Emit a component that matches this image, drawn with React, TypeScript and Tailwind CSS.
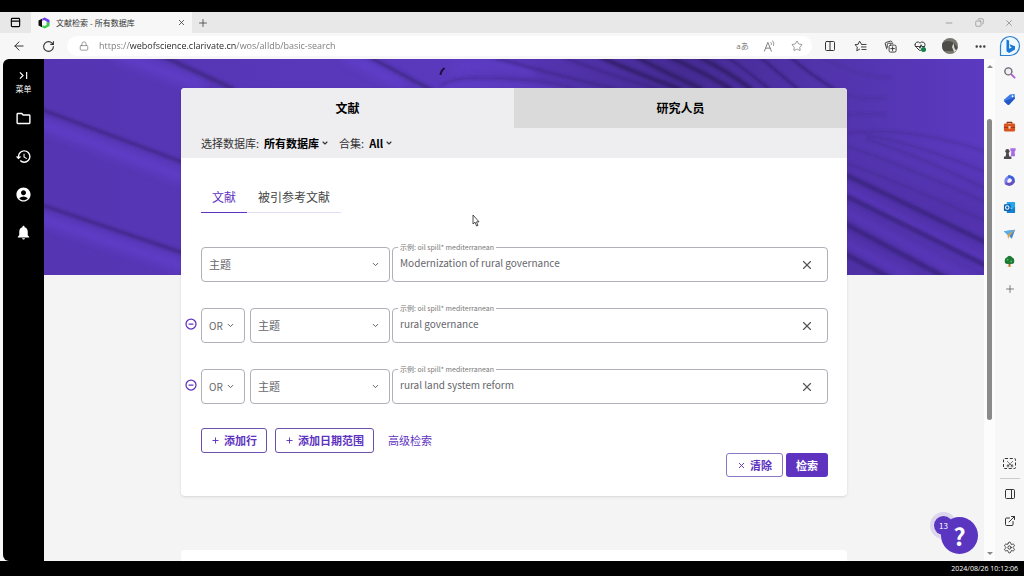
import React, { useState } from 'react';
import {
  ArrowLeft,
  ChevronDown,
  CircleMinus,
  Columns2,
  Copy,
  Ellipsis,
  ExternalLink,
  HeartPulse,
  Lock,
  Minus,
  PanelRight,
  PanelTop,
  Plus,
  RotateCw,
  Scissors,
  Settings,
  Star,
  X,
} from 'lucide-react';
import { MdAccountCircle, MdHistory, MdNotifications, MdOutlineFolder } from 'react-icons/md';

interface SearchRow {
  id: number;
  operator?: string;
  value: string;
}

const initialRows: SearchRow[] = [
  { id: 1, value: 'Modernization of rural governance' },
  { id: 2, operator: 'OR', value: 'rural governance' },
  { id: 3, operator: 'OR', value: 'rural land system reform' },
];

const Logo = () => (
  <svg viewBox="0 0 12 12" className="size-3 shrink-0" aria-hidden="true">
    <path d="M.5 3.500 4 1.800v8.400L.5 8.500z" fill="#111" />
    <path d="M4.300 1.500 6.800.4 11.500 3v3.200L8.600 5V4.200L6 3 4.300 4z" fill="#6a3df0" />
    <path d="M11.500 6V9l-4.700 2.600-2.500-1.200V8.300l2 .7L8.600 8V5z" fill="#3ccb4a" />
  </svg>
);

const TranslateIcon = () => (
  <span className="text-[8px] leading-none" aria-hidden="true">aあ</span>
);

const ReadAloudIcon = () => (
  <svg viewBox="0 0 14 14" className="size-[13px]" fill="none" stroke="currentColor" strokeLinecap="round">
    <path d="m1.500 12 3.700-9.500L9 12M2.800 8.800h4.900" />
    <path d="M8.500 2.500q1 1 .6 2.500M10.500 1q1.800 2.200 1 5" strokeWidth=".8" />
  </svg>
);

const FavoritesIcon = () => (
  <svg viewBox="0 0 14 14" className="size-[13px]" fill="none" stroke="currentColor" strokeLinecap="round" strokeLinejoin="round">
    <path d="M8.200 4.800 6 1.200 4.500 4.600 1 5l2.600 2.500L3 11.600l3-1.700" />
    <path d="M8.500 4.800h4.500M8 7.500h5M8.500 10.200H13" />
  </svg>
);

const CollectionsIcon = () => (
  <svg viewBox="0 0 14 14" className="size-[13px]" fill="none" stroke="currentColor" strokeLinecap="round">
    <path d="M3 9.500 1.300 4.200Q1 3 2.200 2.600L7 1.200q1.200-.3 1.600.8" />
    <path d="M3.500 8V5q0-1.500 1.500-1.500h4.500" />
    <rect x="5.500" y="5.500" width="7.500" height="7.500" rx="1.500" />
    <path d="M9.250 7.300v4M7.250 9.250h4" />
  </svg>
);

const BingIcon = () => (
  <svg viewBox="0 0 22 22" className="size-[22px]">
    <path d="M1.500 20.500V11a9.500 9.500 0 1 1 9.500 9.500z" fill="#eef8ff" stroke="#2b7fd0" strokeWidth="1.200" />
    <path d="m7.500 4.500 2.600 1v8.300l2.700-1.200-1.300-.8-1-2.500 5.500 2v3.200l-5.900 3.400-2.600-1.600z" fill="#1a78d6" />
  </svg>
);

const MagnifierIcon = () => (
  <svg viewBox="0 0 14 14" className="size-[13px]" fill="none" strokeLinecap="round">
    <circle cx="5.800" cy="5.800" r="3.800" fill="#eef0f4" stroke="#6b6670" strokeWidth="1.500" />
    <path d="m9 9 3.500 3.500" stroke="#b05fd6" strokeWidth="2" />
  </svg>
);

const TagIcon = () => (
  <svg viewBox="0 0 14 14" className="size-[13px]">
    <path d="M7.500 1.500 12.500 1l.3 5-6 6.500q-1 .8-2 0L1.300 9q-.8-1 0-2z" fill="#3f7be8" />
    <path d="m1.300 9 3.500 3.500q1 .8 2 0l6-6.500-.1-1.500z" fill="#2456c4" />
    <circle cx="10.300" cy="3.500" r="1" fill="#fff" />
  </svg>
);

const ToolboxIcon = () => (
  <svg viewBox="0 0 14 14" className="size-[13px]">
    <path d="M4.500 4V2.500h5V4" fill="none" stroke="#8a3512" strokeWidth="1.200" />
    <rect x="1" y="3.800" width="12" height="8.500" rx="1.200" fill="#d9531e" />
    <path d="M1 7.500h12v1H1z" fill="#9c3410" />
    <rect x="5.800" y="6.500" width="2.400" height="2.800" rx=".5" fill="#f4d2b8" />
  </svg>
);

const GamesIcon = () => (
  <svg viewBox="0 0 14 14" className="size-[13px]">
    <path d="M8 1h1.200v1H10V1h1.500v1h.7V1h1.300v3l-1 .8.5 5.200H8.500L9 4.800 8 4z" fill="#a86be6" />
    <circle cx="4.800" cy="4.500" r="2.300" fill="#4a4a4e" />
    <path d="M3.600 6.300h2.400l.8 4H9V13H1v-2.700h1.800z" fill="#4a4a4e" />
  </svg>
);

const OfficeIcon = () => (
  <svg viewBox="0 0 14 14" className="size-[13px]" fill="none" strokeWidth="3.200" strokeLinecap="round">
    <path d="M3.200 9.500Q2.200 5.500 6.500 3" stroke="#7a86f2" />
    <path d="M7 2.800q4.500.8 4.200 5" stroke="#3f5fd8" />
    <path d="M11 8.500Q8.500 12.500 4 10.500" stroke="#6a4fc4" />
  </svg>
);

const OutlookIcon = () => (
  <svg viewBox="0 0 14 14" className="size-[13px]">
    <rect x="4" y="1" width="9" height="7" rx=".8" fill="#2aa5ea" />
    <path d="M4 6.500 8.500 9 13 6.500V12q0 1-1 1H5q-1 0-1-1z" fill="#1580cf" />
    <rect x="1" y="3.500" width="7.200" height="7.200" rx=".8" fill="#0b62ad" />
    <circle cx="4.600" cy="7.100" r="1.900" fill="none" stroke="#fff" strokeWidth="1.100" />
  </svg>
);

const DropIcon = () => (
  <svg viewBox="0 0 14 14" className="size-[13px]">
    <path d="M1 3.500 13 2 9.500 11.500 6.800 9z" fill="#3b8bd6" />
    <path d="M1 3.500 13 2 4.800 7.500z" fill="#5aaeea" />
    <path d="M4.800 7.500 13 2 6.800 9l-1.300 3z" fill="#e6a33c" />
  </svg>
);

const TreeIcon = () => (
  <svg viewBox="0 0 14 14" className="size-[13px]">
    <path d="M6 9h2v3.500H6z" fill="#a8642a" />
    <path d="M4 13q3-2 6 0z" fill="#e2a53a" />
    <path d="M7 .8q2 0 2.600 1.700Q12 3.200 12 5.500 13 10 8.500 9.700h-3Q1 10 2 5.500 2 3.200 4.400 2.500 5 .8 7 .8z" fill="#1c7a35" />
    <circle cx="5" cy="5" r="1" fill="#4dbb55" />
    <circle cx="8.800" cy="7" r="1" fill="#4dbb55" />
  </svg>
);

const ScreenshotIcon = () => (
  <span className="grid h-[11px] w-[13px] place-items-center rounded-[2px] border border-dashed border-[#333]">
    <Scissors size={8} className="-rotate-90" />
  </span>
);

const Cursor = () => (
  <svg viewBox="0 0 8 13" className="absolute left-[428px] top-[155px] h-[13px] w-2" aria-hidden="true">
    <path d="M1 1v9l2-1.800L4.600 12l1.400-.6-1.500-3.600H7z" fill="#fff" stroke="#222" strokeWidth=".8" />
  </svg>
);

const Banner = () => (
  <svg
    viewBox="0 0 941 216"
    preserveAspectRatio="none"
    className="col-start-1 row-start-1 h-[216px] w-full"
    aria-hidden="true"
  >
    <defs>
      <linearGradient id="base" x1="0" x2="1">
        <stop offset="0" stopColor="#5635b2" />
        <stop offset=".45" stopColor="#5a39bd" />
        <stop offset=".58" stopColor="#4f31a6" />
        <stop offset=".68" stopColor="#452a92" />
        <stop offset=".82" stopColor="#5133aa" />
        <stop offset="1" stopColor="#5b3ac0" />
      </linearGradient>
      <linearGradient id="shade" x1="0" y1="0" x2="0" y2="1">
        <stop offset=".4" stopColor="#4a2c9c" stopOpacity="0" />
        <stop offset=".7" stopColor="#4a2c9c" stopOpacity=".5" />
      </linearGradient>
      <filter id="soft" x="-5%" y="-20%" width="110%" height="140%">
        <feGaussianBlur stdDeviation="1.800" />
      </filter>
      <filter id="softer" x="-5%" y="-20%" width="110%" height="140%">
        <feGaussianBlur stdDeviation="4" />
      </filter>
    </defs>
    <rect width="941" height="216" fill="url(#base)" />
    <rect x="800" width="141" height="216" fill="url(#shade)" />
    {/* lit side of each fold */}
    <g filter="url(#softer)" fill="none" stroke="#5f3dc8">
      <path d="M-20 58 160 126M-20 154 160 214M70-6 160 28M300-4 360 26" strokeWidth="11" />
      <path d="M396 32q40-12 130 4M410 10q40-10 80 4" strokeWidth="7" />
      <path d="M795 128 960 212M795 148 930 222M790 176l80 44" strokeWidth="7" strokeOpacity=".7" />
    </g>
    {/* shadow side */}
    <g filter="url(#soft)" fill="none" stroke="#3d2585">
      <path d="M-20 44 160 111M-20 140 160 201" strokeWidth="4" strokeOpacity=".8" />
      <path d="M112-6 190 30" strokeWidth="5" strokeOpacity=".8" />
      <path d="M320-5 390 32" strokeWidth="4" strokeOpacity=".8" />
      <path d="M396 27q14-9 40-8 60 0 94 10" strokeWidth="2" strokeOpacity=".6" />
      <path d="M450-2q60 18 123 32M520-2q45 18 95 32" strokeWidth="3" strokeOpacity=".7" />
      <path d="M557-2q40 18 80 32M593-2q34 18 66 32M626-2q32 14 62 32M656-2q28 14 52 32" stroke="#2e1a66" strokeWidth="5" strokeOpacity=".8" />
      <path d="M684-2q20 14 42 32M717-2q16 14 38 32M747-2q18 16 44 32" stroke="#331e70" strokeWidth="2" />
      <path d="M780-2q38 22 68 20M803 36q20 6 40 2M803 56q30-2 40 0" strokeWidth="2" strokeOpacity=".4" />
      <path d="M803 74q64-8 150 22M822 76q50 8 131 41M822 80q50 14 131 55M803 87q60 20 150 61M803 104q60 22 150 63" strokeWidth="3" strokeOpacity=".35" />
      <path d="M803 116 950 187M803 137 950 210M795 161 905 220M795 191l54 29" stroke="#371f78" strokeWidth="5" strokeOpacity=".75" />
    </g>
    <path d="M397 16q0-4 4-7" fill="none" stroke="#1c103f" strokeWidth="2" />
  </svg>
);

const BrowserChrome = () => (
  <header className="font-['Open_Sans','Noto_Sans_CJK_SC',sans-serif] text-[#333]">
    <div className="flex h-[21px] items-stretch bg-[#e8e8e8]">
      <button className="grid w-[31px] place-items-center text-black" aria-label="Tab actions">
        <PanelTop size={11} strokeWidth={2.5} />
      </button>
      <div className="flex w-[161px] items-center gap-1.5 bg-[#f7f7f7] pl-[7px] pr-1.5">
        <Logo />
        <span className="flex-1 truncate text-[8px]">文献检索 - 所有数据库</span>
        <button aria-label="Close tab"><X size={9} /></button>
      </div>
      <button className="ml-px grid w-5 place-items-center" aria-label="New tab"><Plus size={12} strokeWidth={1.5} /></button>
      <div className="ml-auto flex text-[#777]">
        <button className="grid w-[30px] place-items-center" aria-label="Minimize"><Minus size={10} strokeWidth={1.5} /></button>
        <button className="grid w-[30px] place-items-center" aria-label="Restore"><Copy size={9} strokeWidth={1.5} className="-scale-x-100" /></button>
        <button className="grid w-[30px] place-items-center" aria-label="Close window"><X size={10} strokeWidth={1.5} /></button>
      </div>
    </div>
    <div className="flex h-[26px] items-center bg-[#f7f7f7]">
      <button className="grid w-[37px] place-items-center" aria-label="Back"><ArrowLeft size={14} strokeWidth={1.7} /></button>
      <button className="grid w-[22px] place-items-center" aria-label="Refresh"><RotateCw size={13} strokeWidth={2} /></button>
      <div className="ml-2 mr-[3px] flex h-[20px] flex-1 items-center rounded-full bg-white pl-3 pr-0.5 text-[#777]">
        <Lock size={10} strokeWidth={1.7} />
        <input
          aria-label="Address"
          defaultValue="https://webofscience.clarivate.cn/wos/alldb/basic-search"
          className="ml-[10px] min-w-0 flex-1 bg-[linear-gradient(90deg,#777_30px,#222_30px,#222_137px,#777_137px)] bg-clip-text text-[9px] text-transparent outline-none"
        />
        <button className="grid w-[27px] place-items-center" aria-label="Translate"><TranslateIcon /></button>
        <button className="grid w-[27px] place-items-center" aria-label="Read aloud"><ReadAloudIcon /></button>
        <button className="grid w-[27px] place-items-center" aria-label="Add to favorites"><Star size={12} strokeWidth={1.5} /></button>
      </div>
      <button className="grid w-[30px] place-items-center" aria-label="Split screen"><Columns2 size={12} /></button>
      <button className="grid w-[30px] place-items-center" aria-label="Favorites"><FavoritesIcon /></button>
      <button className="grid w-[30px] place-items-center" aria-label="Collections"><CollectionsIcon /></button>
      <button className="relative grid w-[30px] place-items-center" aria-label="Browser essentials">
        <HeartPulse size={12} />
        <span className="absolute bottom-0 right-[9px] size-[5px] rounded-full bg-[#14804a]" />
      </button>
      <button className="grid w-[30px] place-items-center" aria-label="Profile">
        <svg viewBox="0 0 16 16" className="size-4 rounded-full">
          <rect width="16" height="16" fill="#77766f" />
          <path d="M0 5q6-4 12 0l4 5-4 3H0z" fill="#4c4c48" />
          <path d="m10 9 1.500-4 1 5 2 3-2.500 1z" fill="#d8d6cc" />
        </svg>
      </button>
      <button className="grid w-[30px] place-items-center" aria-label="More"><Ellipsis size={13} strokeWidth={2.5} /></button>
      <button className="grid w-[29px] place-items-center" aria-label="Bing"><BingIcon /></button>
    </div>
  </header>
);

const SideNav = () => (
  <nav className="flex w-[41px] shrink-0 flex-col items-center rounded-l-md bg-black pt-[11px] text-white">
    <button className="flex flex-col items-center gap-0.5 text-[8px] leading-3">
      <svg viewBox="0 0 10 10" className="my-px size-[9px]" fill="none" stroke="currentColor" strokeWidth="1.300">
        <path d="m1 1.500 3.500 3.500L1 8.500M8.500 1v8" />
      </svg>
      菜单
    </button>
    <div className="mt-[15px] flex flex-col gap-[21px]">
      <button aria-label="文件夹"><MdOutlineFolder size={17} /></button>
      <button aria-label="历史"><MdHistory size={17} /></button>
      <button aria-label="账户"><MdAccountCircle size={17} /></button>
      <button aria-label="通知"><MdNotifications size={17} /></button>
    </div>
  </nav>
);

const edgeApps = [
  { name: 'Search', icon: <MagnifierIcon /> },
  { name: 'Shopping', icon: <TagIcon /> },
  { name: 'Tools', icon: <ToolboxIcon /> },
  { name: 'Games', icon: <GamesIcon /> },
  { name: 'Microsoft 365', icon: <OfficeIcon /> },
  { name: 'Outlook', icon: <OutlookIcon /> },
  { name: 'Drop', icon: <DropIcon /> },
  { name: 'Tree', icon: <TreeIcon /> },
  { name: 'Customize', icon: <Plus size={12} strokeWidth={1.5} className="text-[#555]" /> },
];

const EdgeBar = () => (
  <aside className="flex w-[29px] shrink-0 flex-col items-center bg-[#f7f7f7] text-[#333]">
    {edgeApps.map((app) => (
      <button key={app.name} aria-label={app.name} className="grid h-[27px] w-full place-items-center">
        {app.icon}
      </button>
    ))}
    <button className="mt-auto grid h-[27px] place-items-center" aria-label="Screenshot"><ScreenshotIcon /></button>
    <hr className="my-px w-5 border-[#ccc]" />
    <button className="grid h-[27px] place-items-center" aria-label="Hide sidebar"><PanelRight size={12} /></button>
    <button className="grid h-[27px] place-items-center" aria-label="Open in new window"><ExternalLink size={12} /></button>
    <button className="grid h-[27px] place-items-center" aria-label="Settings"><Settings size={13} strokeWidth={1.7} /></button>
  </aside>
);

const ScrollBar = () => (
  <div className="flex w-[11px] shrink-0 flex-col items-center bg-[#fcfcfc] py-1.5" aria-hidden="true">
    <span className="border-x-[3px] border-b-[3px] border-x-transparent border-b-[#888]" />
    <span className="mt-[51px] h-[301px] w-[5px] rounded-full bg-[#8a8a8a]" />
    <span className="mt-auto border-x-[3px] border-t-[3px] border-x-transparent border-t-[#888]" />
  </div>
);

interface PickerProps {
  label: string;
  options: string[];
  className: string;
}

const Picker: React.FC<PickerProps> = ({ label, options, className }) => (
  <div className={`relative h-[35px] shrink-0 ${className}`}>
    <select
      aria-label={label}
      className="size-full appearance-none rounded border border-[#b0b0b8] bg-white px-[7px] text-[#66666c]"
    >
      {options.map((o) => (
        <option key={o}>{o}</option>
      ))}
    </select>
    <ChevronDown size={9} strokeWidth={2.5} className="pointer-events-none absolute right-[10px] top-[13px] text-[#555]" />
  </div>
);

interface InlineSelectProps {
  label: string;
  value: string;
}

const InlineSelect: React.FC<InlineSelectProps> = ({ label, value }) => (
  <label className="flex items-center">
    <span className="mr-[5px]">{label}:</span>
    <select className="appearance-none font-bold text-black [field-sizing:content]">
      <option>{value}</option>
    </select>
    <ChevronDown size={8} strokeWidth={3.5} className="ml-0.5" />
  </label>
);

interface RowProps {
  row: SearchRow;
  onChange: (id: number, value: string) => void;
  onRemove: (id: number) => void;
}

const QueryRow: React.FC<RowProps> = ({ row, onChange, onRemove }) => (
  <div className="flex items-center">
    {row.operator && (
      <>
        <button
          onClick={() => onRemove(row.id)}
          aria-label="删除行"
          className="-ml-4 mr-1 pb-1 text-[#5e33bf]"
        >
          <CircleMinus size={12} strokeWidth={2.5} />
        </button>
        <Picker label="运算符" options={[row.operator, 'AND', 'NOT']} className="mr-[5px] w-[44px] text-[10px]" />
      </>
    )}
    <Picker
      label="字段"
      options={['主题', '标题', '作者']}
      className={row.operator ? 'w-[140px] text-[11px]' : 'w-[189px] text-[11px]'}
    />
    <div className="relative ml-0.5 flex h-[35px] min-w-0 flex-1 items-center rounded border border-[#b0b0b8] bg-white pl-[7px] pr-[13px]">
      <label
        htmlFor={`query-${row.id}`}
        className="absolute -top-[6px] left-[5px] bg-white px-0.5 text-[7px] leading-[10px] text-[#777]"
      >
        示例: oil spill* mediterranean
      </label>
      <input
        id={`query-${row.id}`}
        value={row.value}
        onChange={(e) => onChange(row.id, e.target.value)}
        className="min-w-0 flex-1 pb-1 text-[10px] text-[#66666c] outline-none"
      />
      <button onClick={() => onChange(row.id, '')} aria-label="清除输入" className="text-[#555]">
        <X size={14} />
      </button>
    </div>
  </div>
);

const SearchCard = () => {
  const [rows, setRows] = useState(initialRows);

  const changeRow = (id: number, value: string) =>
    setRows(rows.map((r) => (r.id === id ? { ...r, value } : r)));
  const removeRow = (id: number) => setRows(rows.filter((r) => r.id !== id));
  const addRow = () => setRows([...rows, { id: Date.now(), operator: 'OR', value: '' }]);

  return (
    <section className="rounded bg-white shadow">
      <div className="grid h-10 grid-cols-2 rounded-t bg-[#eeedf0] text-[12px] font-bold text-black">
        <button className="rounded-tl">文献</button>
        <button className="rounded-tr bg-[#dadada]">研究人员</button>
      </div>
      <div className="flex h-[30px] items-center gap-2.5 bg-[#eeedf0] px-5 text-[11px] text-[#333]">
        <InlineSelect label="选择数据库" value="所有数据库" />
        <InlineSelect label="合集" value="All" />
      </div>

      <div className="pb-[19px] pl-5 pr-[19px] pt-6">
        <div className="flex text-[12px]">
          <button className="h-[31px] border-b border-[#5e33bf] px-[11px] text-[#5e33bf]">文献</button>
          <button className="h-[31px] border-b border-[#e2dcf5] px-[11px] text-[#444]">被引参考文献</button>
        </div>

        <div className="mt-[34px] flex flex-col gap-[26px]">
          {rows.map((row) => (
            <QueryRow key={row.id} row={row} onChange={changeRow} onRemove={removeRow} />
          ))}
        </div>

        <div className="mt-6 flex items-center gap-2 text-[11px] text-[#5e33bf]">
          <button
            onClick={addRow}
            className="flex h-[25px] items-center gap-1 rounded-[3px] border border-[#6a50a8] px-[9px] font-bold"
          >
            <Plus size={9} strokeWidth={2.5} />
            添加行
          </button>
          <button className="flex h-[25px] items-center gap-1 rounded-[3px] border border-[#6a50a8] px-[9px] font-bold">
            <Plus size={9} strokeWidth={2.5} />
            添加日期范围
          </button>
          <a href="#advanced" className="ml-1.5">高级检索</a>
        </div>
        <div className="flex justify-end gap-[3px] text-[11px] font-bold">
          <button
            onClick={() => setRows(rows.map((r) => ({ ...r, value: '' })))}
            className="flex h-6 items-center gap-1 rounded-[3px] border border-[#8a78c4] px-2.5 text-[#5e33bf]"
          >
            <X size={9} strokeWidth={2.5} />
            清除
          </button>
          <button className="h-6 rounded-[3px] bg-[#5e33bf] px-2.5 text-white">检索</button>
        </div>
      </div>
    </section>
  );
};

export default function App() {
  return (
    <div className="flex h-screen flex-col overflow-hidden bg-black pt-3 font-['Noto_Sans_CJK_SC',sans-serif]">
      <BrowserChrome />
      <div className="flex min-h-0 flex-1 bg-[#f7f7f7] pl-[3px]">
        <SideNav />
        <main className="relative min-w-0 flex-1 overflow-hidden bg-[#f4f4f5]">
          <div className="grid grid-cols-1 items-start">
            <Banner />
            <div className="col-start-1 row-start-1 mx-auto w-full max-w-[666px] pt-[29px]">
              <SearchCard />
              <div className="mt-[54px] h-20 rounded bg-white" />
            </div>
          </div>
          <Cursor />
          <button
            aria-label="帮助"
            className="absolute bottom-[7px] right-[6px] grid size-[37px] place-items-center rounded-full bg-[#5a35c0] text-[24px] font-bold leading-none text-white"
          >
            ?
            <span className="absolute -left-[7px] -top-px grid size-[19px] place-items-center rounded-full bg-[#5a35c0] text-[8px] font-normal ring-4 ring-[#5a35c0]/15">
              13
            </span>
          </button>
        </main>
        <ScrollBar />
        <EdgeBar />
      </div>
      <footer className="h-[15px] shrink-0 px-1.5 text-right font-['Open_Sans',sans-serif] text-[7px] leading-4 text-white">
        2024/08/26 10:12:06
      </footer>
    </div>
  );
}
